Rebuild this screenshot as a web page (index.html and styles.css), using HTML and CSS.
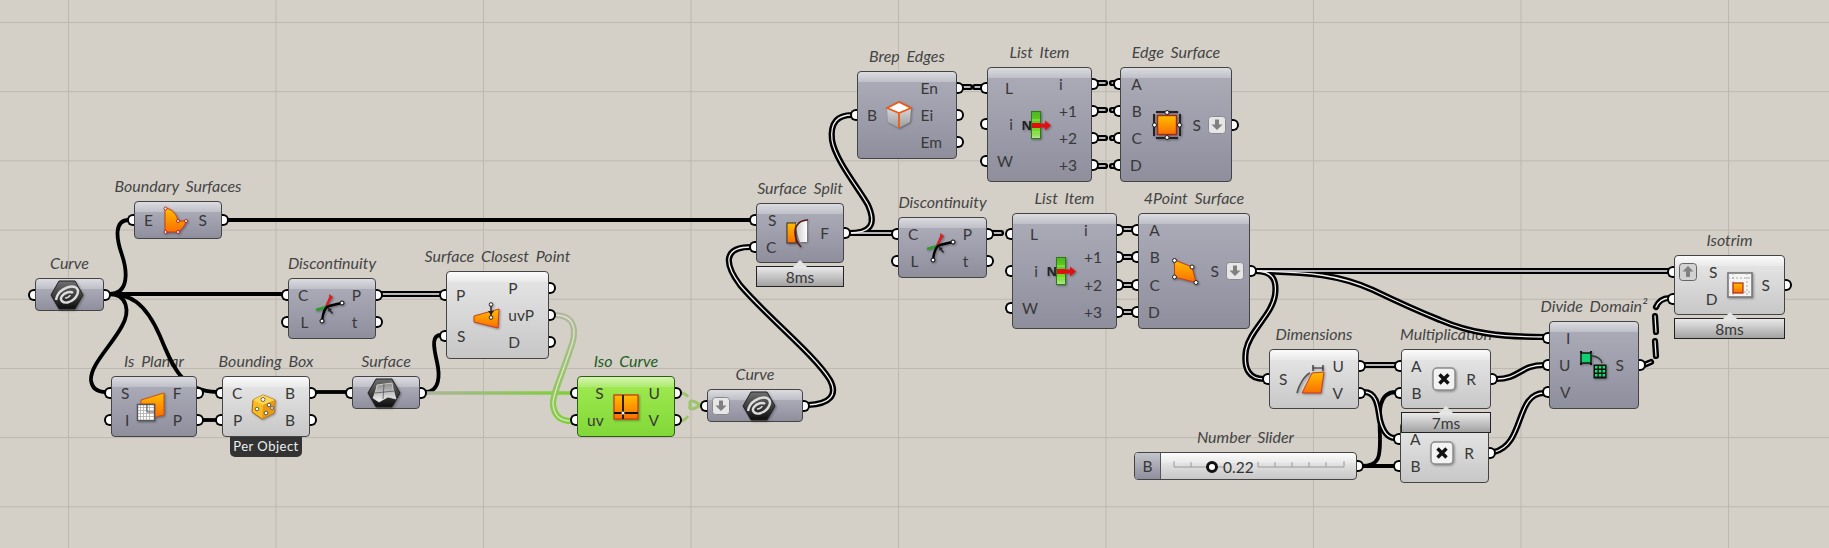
FILE: index.html
```html
<!DOCTYPE html>
<html lang="en">
<head>
    <meta charset="UTF-8">
    <title>Grasshopper definition</title>
    <link rel="stylesheet" href="styles.css">
</head>
<body>
<!-- shared gradients and icons -->
<svg class="defs" width="0" height="0">
    <defs>
        <linearGradient id="orange" x1="0" y1="0" x2="0" y2="1">
            <stop offset="0" stop-color="#ffbe00"/>
            <stop offset="1" stop-color="#fa6e00"/>
        </linearGradient>
        <linearGradient id="hexfill" x1="0" y1="0" x2="0" y2="1">
            <stop offset="0" stop-color="#707070"/>
            <stop offset=".55" stop-color="#3a3a3a"/>
            <stop offset="1" stop-color="#0c0c0c"/>
        </linearGradient>
        <linearGradient id="patch" x1="0" y1="0" x2="0" y2="1">
            <stop offset="0" stop-color="#8a8a8a"/>
            <stop offset="1" stop-color="#f4f4f4"/>
        </linearGradient>
        <linearGradient id="barfill" x1="0" y1="0" x2="0" y2="1">
            <stop offset="0" stop-color="#4cb820"/>
            <stop offset=".75" stop-color="#74dc28"/>
            <stop offset="1" stop-color="#b8e49c"/>
        </linearGradient>
        <linearGradient id="sidefill" x1="0" y1="0" x2="0" y2="1">
            <stop offset="0" stop-color="#d8d8d8"/>
            <stop offset="1" stop-color="#9c9c9c"/>
        </linearGradient>
        <linearGradient id="splitfill" x1="0" y1="0" x2="1" y2="0">
            <stop offset="0" stop-color="#c8c8c8"/>
            <stop offset="1" stop-color="#ffffff"/>
        </linearGradient>
        <linearGradient id="greenwire" gradientUnits="userSpaceOnUse" x1="0" y1="315" x2="0" y2="421">
            <stop offset="0" stop-color="#b4b6a4"/>
            <stop offset="1" stop-color="#80d03a"/>
        </linearGradient>
        <linearGradient id="greenline" gradientUnits="userSpaceOnUse" x1="425" y1="0" x2="572" y2="0">
            <stop offset="0" stop-color="#acb49c"/>
            <stop offset="1" stop-color="#7ed036"/>
        </linearGradient>

        <symbol id="i-curve" viewBox="0 0 34 30">
            <path d="M1 15 9 1H25L33 15 25 29H9Z" fill="url(#hexfill)" stroke="#222"/>
            <g fill="none" stroke="#dcdcdc">
                <path stroke-width="2.400" d="M6 20C7 11 18 5 25 7 31 10 27 19 19 22 13 24 9 20 12 16 15 12 21 11 23 13"/>
                <path stroke-width="1.600" d="M15 18C18 18 20 16 20 15"/>
            </g>
        </symbol>
        <symbol id="i-disc" viewBox="0 0 30 30">
            <path d="M11 13 16 2" stroke="#d82020" stroke-width="2.5" fill="none"/>
            <path d="M14 0 18 3 15 7Z" fill="#d82020"/>
            <path d="M1 16 11 13" stroke="#28a028" stroke-width="2.5"/>
            <path d="M7 27C8 18 10 13 14 12 18 11 22 10 27 9" stroke="#000" stroke-width="2.4" fill="none"/>
            <path d="M13 14 17 15 15.5 16 18 19 17 20 14.5 17 13.5 18Z" fill="#222"/>
            <circle cx="7" cy="27" r="2" fill="#fff" stroke="#000"/>
            <circle cx="27" cy="9" r="2" fill="#fff" stroke="#000"/>
        </symbol>
        <symbol id="i-list" viewBox="0 0 29 28">
            <text x="-0.500" y="19" class="icon-n">N</text>
            <rect x="9.5" y="0.5" width="9" height="27" fill="url(#barfill)" stroke="#2f7a18"/>
            <path d="M10 9H18M10 21H18" stroke="#9ee860" stroke-width="1"/>
            <rect x="10" y="12" width="8" height="5" fill="#e01010"/>
            <path d="M17 12.5H23V9.5L29 14.5 23 19.5V16.5H17Z" fill="#e01010"/>
        </symbol>
        <symbol id="i-down" viewBox="0 0 18 18">
            <rect x="0.5" y="0.5" width="17" height="17" rx="3" fill="#e6e6e6" stroke="#8a8a8a"/>
            <path d="M9 14 3.5 8.5H7V3.5H11V8.5H14.5Z" fill="#808080"/>
        </symbol>
        <symbol id="i-mult" viewBox="0 0 24 24">
            <rect x="1" y="1" width="22" height="22" rx="4" fill="#f2f2f2" stroke="#8c8c8c" stroke-width="1.5"/>
            <path d="M7.5 7.5 16.5 16.5M16.5 7.5 7.5 16.5" stroke="#111" stroke-width="3.4"/>
        </symbol>
    </defs>
</svg>

<div class="canvas">
    <svg class="wires" width="1829" height="548">
        <defs>
            <g id="lists">
                <path d="M381 294H441"/>
                <path d="M808 405C830 404 838 395 830 380 815 355 765 315 740 285 725 265 722 247 751 247"/>
                <path d="M849 233H893"/>
                <path d="M849 233C870 233 877 225 868 205 860 190 835 160 832 140 830 122 838 115 852 115"/>
                <path d="M992 233H1001"/>
                <path d="M962 87H970M975 87H982"/>
                <path d="M1097 83H1105M1112 83H1115"/>
                <path d="M1097 110H1105M1112 110H1115"/>
                <path d="M1097 138H1105M1112 138H1115"/>
                <path d="M1097 166H1105M1112 166H1115"/>
                <path d="M1122 229H1133M1122 257H1133M1122 285H1133M1122 312H1133"/>
                <path d="M1255 271H1669"/>
                <path d="M1255 271C1310 272 1340 275 1373 290 1400 303 1415 310 1440 320 1470 333 1500 337 1544 337"/>
                <path d="M1255 271C1273 271 1277 280 1275 295 1272 315 1250 330 1246 350 1243 370 1250 379 1264 379"/>
                <path d="M1364 365H1396"/>
                <path d="M1364 392C1378 392 1378 410 1380 420 1383 432 1388 438 1395 438"/>
                <path d="M1496 379C1520 379 1520 365 1544 365"/>
                <path d="M1494 452C1525 445 1515 393 1544 393"/>
                <path d="M1644 365 1651 362"/>
                <path d="M1655 341 1656 356"/>
                <path d="M1655 316 1656 332"/>
                <path d="M1656 307C1658 302 1663 298 1669 298"/>
            </g>
        </defs>
        <g class="wire-item">
            <path d="M109 294C130 294 127 270 122 255 116 238 114 220 129 220"/>
            <path d="M109 294H283"/>
            <path d="M109 294C128 294 130 312 122 326 112 345 90 365 91 380 92 390 100 392 106 392"/>
            <path d="M109 294C130 294 145 302 160 336 172 365 182 392 217 392"/>
            <path d="M202 420H217"/>
            <path d="M315 392H347"/>
            <path d="M425 392C440 392 440 375 437 362 433 345 432 335 441 335"/>
            <path d="M226 220H751"/>
            <path d="M1362 466H1395"/>
            <path d="M1362 466C1380 466 1380 455 1380 440 1380 420 1375 392 1396 392"/>
        </g>
        <use href="#lists" class="wire-outer"/>
        <use href="#lists" class="wire-inner"/>
        <path class="wire-green" d="M425 393H572"/>
        <path class="wire-green-o" d="M554 315C575 315 578 330 570 350 562 375 552 395 553 405 555 420 565 421 572 421"/>
        <path class="wire-green-i" d="M554 315C575 315 578 330 570 350 562 375 552 395 553 405 555 420 565 421 572 421"/>
        <path class="wire-hidden" d="M680 393C684 393 686 394 688 397M680 421C684 421 686 419 688 416M702 405C698 405 696 401 692 401 689 401 689 405 692 405 689 405 689 409 692 409 696 409 698 405 702 405"/>
    </svg>

    <div class="node n-bsrf">
        <div class="title">Boundary Surfaces</div>
        <div class="body dark">
            <div class="ports in"><span class="port">E</span></div>
            <div class="icon">
                <svg class="ico" width="26" height="28" viewBox="0 0 26 28">
                    <path d="M2 2C10 3 14 9 15 15H23C22 20 19 23 15 26H2Z" fill="url(#orange)" stroke="#c83c20"/>
                    <g fill="#fff" stroke="#b02828">
                        <circle cx="2.5" cy="2.5" r="1.5"/><circle cx="15" cy="15" r="1.5"/><circle cx="23" cy="15" r="1.5"/><circle cx="15" cy="26" r="1.5"/><circle cx="2.5" cy="26" r="1.5"/>
                    </g>
                </svg>
            </div>
            <div class="ports out"><span class="port">S</span></div>
        </div>
    </div>

    <div class="node n-curve">
        <div class="title">Curve</div>
        <div class="body dark">
            <div class="ports in"><span class="port"></span></div>
            <div class="icon"><svg class="ico" width="34" height="30"><use href="#i-curve"/></svg></div>
            <div class="ports out"><span class="port"></span></div>
        </div>
    </div>

    <div class="node n-disc1">
        <div class="title">Discontinuity</div>
        <div class="body dark">
            <div class="ports in"><span class="port">C</span><span class="port">L</span></div>
            <div class="icon"><svg class="ico" width="30" height="30"><use href="#i-disc"/></svg></div>
            <div class="ports out"><span class="port">P</span><span class="port">t</span></div>
        </div>
    </div>

    <div class="node n-planar">
        <div class="title">Is Planar</div>
        <div class="body dark">
            <div class="ports in"><span class="port">S</span><span class="port">I</span></div>
            <div class="icon">
                <svg class="ico" width="30" height="30" viewBox="0 0 30 30">
                    <path d="M5 8 28 1V23L19 25V12H5Z" fill="url(#orange)" stroke="#d05010"/>
                    <rect x="1.5" y="12.5" width="17" height="16" fill="#fff" stroke="#555" stroke-width="1.4"/>
                    <path d="M4.500 13V28M7.500 13V28M10.500 13V28M13.500 13V28M2 15.500H18M2 18.500H18M2 21.500H18M2 24.500H18" stroke="#aaa" stroke-width=".8"/>
                    <path d="M11 13V20H18" fill="none" stroke="#555"/>
                </svg>
            </div>
            <div class="ports out"><span class="port">F</span><span class="port">P</span></div>
        </div>
    </div>

    <div class="node n-bbox">
        <div class="title">Bounding Box</div>
        <div class="body light">
            <div class="ports in"><span class="port">C</span><span class="port">P</span></div>
            <div class="icon">
                <svg class="ico" width="25" height="26" viewBox="0 0 25 26">
                    <path d="M12 1 24 6 23 19 11 25 1 18 2 6Z" fill="#f8bc20" stroke="#a86010"/>
                    <path d="M2 6 12 11 24 6 12 1Z" fill="#ffd850"/>
                    <path d="M12 11 11 25 23 19 24 6Z" fill="#e89a14"/>
                    <g fill="#fff" stroke="#444" stroke-width=".8">
                        <circle cx="12" cy="5.500" r="2"/><circle cx="6" cy="15" r="1.800"/><circle cx="18" cy="11" r="1.800"/><circle cx="15" cy="19" r="1.800"/><circle cx="21" cy="14" r="1.500"/>
                    </g>
                </svg>
            </div>
            <div class="ports out"><span class="port">B</span><span class="port">B</span></div>
        </div>
        <div class="badge">Per Object</div>
    </div>

    <div class="node n-srf">
        <div class="title">Surface</div>
        <div class="body dark">
            <div class="ports in"><span class="port"></span></div>
            <div class="icon">
                <svg class="ico" width="34" height="30" viewBox="0 0 34 30">
                    <path d="M1 15 9 1H25L33 15 25 29H9Z" fill="url(#hexfill)" stroke="#222"/>
                    <path d="M10 7 25 5C26 12 28 17 29 21L21 19 12 24 6 20C8 16 9 12 10 7Z" fill="url(#patch)" stroke="#ddd" stroke-width=".8"/>
                    <path d="M17 6 16 21M8 15 27 13" stroke="#555" stroke-width=".8" fill="none"/>
                </svg>
            </div>
            <div class="ports out"><span class="port"></span></div>
        </div>
    </div>

    <div class="node n-scp">
        <div class="title">Surface Closest Point</div>
        <div class="body light">
            <div class="ports in"><span class="port">P</span><span class="port">S</span></div>
            <div class="icon">
                <svg class="ico" width="27" height="27" viewBox="0 0 27 27">
                    <path d="M1 14 26 7 25 26 1 20Z" fill="url(#orange)" stroke="#c83c20"/>
                    <path d="M18 2V15" stroke="#222" stroke-width="1.400"/>
                    <path d="M15 9H21L18 13Z" fill="#222"/>
                    <circle cx="18" cy="2.500" r="1.800" fill="#fff" stroke="#222"/>
                    <circle cx="18" cy="15.500" r="1.800" fill="#fff" stroke="#222"/>
                </svg>
            </div>
            <div class="ports out"><span class="port">P</span><span class="port">uvP</span><span class="port">D</span></div>
        </div>
    </div>

    <div class="node n-iso">
        <div class="title green-text">Iso Curve</div>
        <div class="body green">
            <div class="ports in"><span class="port">S</span><span class="port">uv</span></div>
            <div class="icon">
                <svg class="ico" width="26" height="26" viewBox="0 0 26 26">
                    <rect x="1" y="1" width="24" height="24" fill="url(#orange)" stroke="#d04418" stroke-width="1.400"/>
                    <path d="M10 1V25M1 19H25" stroke="#111" stroke-width="1.800"/>
                    <circle cx="10" cy="19" r="1.500" fill="#fff"/>
                </svg>
            </div>
            <div class="ports out"><span class="port">U</span><span class="port">V</span></div>
        </div>
    </div>

    <div class="node n-curve2">
        <div class="title">Curve</div>
        <div class="body dark">
            <div class="ports in"><span class="port has-btn"><svg class="btn" width="18" height="18"><use href="#i-down"/></svg></span></div>
            <div class="icon"><svg class="ico" width="34" height="30"><use href="#i-curve"/></svg></div>
            <div class="ports out"><span class="port"></span></div>
        </div>
    </div>

    <div class="node n-split">
        <div class="title">Surface Split</div>
        <div class="body dark">
            <div class="ports in"><span class="port">S</span><span class="port">C</span></div>
            <div class="icon">
                <svg class="ico" width="24" height="30" viewBox="0 0 24 30">
                    <rect x="1" y="5" width="9" height="20" fill="url(#orange)" stroke="#333"/>
                    <path d="M10 5C14 4 18 3 21 3V24H14C12 19 10 12 10 5Z" fill="url(#splitfill)"/>
                    <path d="M22 2C14 2 9 7 9 14 9 20 11 25 15 29" fill="none" stroke="#5a1a10" stroke-width="1.600"/>
                </svg>
            </div>
            <div class="ports out"><span class="port">F</span></div>
        </div>
        <div class="tip">8ms</div>
    </div>

    <div class="node n-brep">
        <div class="title">Brep Edges</div>
        <div class="body dark">
            <div class="ports in"><span class="port">B</span></div>
            <div class="icon">
                <svg class="ico" width="26" height="28" viewBox="0 0 26 28">
                    <path d="M1 7 13 12V27L2 21Z" fill="url(#sidefill)"/>
                    <path d="M13 12 25 7 24 21 13 27Z" fill="url(#sidefill)"/>
                    <path d="M1 7 13 1 25 7 13 12Z" fill="#fff"/>
                    <path d="M1 7 13 1 25 7 13 12ZM13 12V27" fill="none" stroke="#ec5a14" stroke-width="1.800"/>
                </svg>
            </div>
            <div class="ports out"><span class="port">En</span><span class="port">Ei</span><span class="port">Em</span></div>
        </div>
    </div>

    <div class="node n-list1">
        <div class="title">List Item</div>
        <div class="body dark">
            <div class="ports in"><span class="port">L</span><span class="port">i</span><span class="port">W</span></div>
            <div class="icon"><svg class="ico" width="29" height="28"><use href="#i-list"/></svg></div>
            <div class="ports out"><span class="port">i</span><span class="port">+1</span><span class="port">+2</span><span class="port">+3</span></div>
        </div>
    </div>

    <div class="node n-edge">
        <div class="title">Edge Surface</div>
        <div class="body dark">
            <div class="ports in"><span class="port">A</span><span class="port">B</span><span class="port">C</span><span class="port">D</span></div>
            <div class="icon">
                <svg class="ico" width="30" height="30" viewBox="0 0 30 30">
                    <path d="M4 2H26M4 28H26M2 4V26M28 4V26" stroke="#222" stroke-width="2"/>
                    <rect x="5.500" y="5.500" width="19" height="19" fill="url(#orange)" stroke="#a82818" stroke-width="1.400"/>
                    <g fill="#fff" stroke="#222"><circle cx="15" cy="2.500" r="2"/><circle cx="15" cy="27.500" r="2"/><circle cx="2.500" cy="15" r="2"/><circle cx="27.500" cy="15" r="2"/></g>
                </svg>
            </div>
            <div class="ports out"><span class="port has-btn">S<svg class="btn" width="18" height="18"><use href="#i-down"/></svg></span></div>
        </div>
    </div>

    <div class="node n-disc2">
        <div class="title">Discontinuity</div>
        <div class="body dark">
            <div class="ports in"><span class="port">C</span><span class="port">L</span></div>
            <div class="icon"><svg class="ico" width="30" height="30"><use href="#i-disc"/></svg></div>
            <div class="ports out"><span class="port">P</span><span class="port">t</span></div>
        </div>
    </div>

    <div class="node n-list2">
        <div class="title">List Item</div>
        <div class="body dark">
            <div class="ports in"><span class="port">L</span><span class="port">i</span><span class="port">W</span></div>
            <div class="icon"><svg class="ico" width="29" height="28"><use href="#i-list"/></svg></div>
            <div class="ports out"><span class="port">i</span><span class="port">+1</span><span class="port">+2</span><span class="port">+3</span></div>
        </div>
    </div>

    <div class="node n-four">
        <div class="title">4Point Surface</div>
        <div class="body dark">
            <div class="ports in"><span class="port">A</span><span class="port">B</span><span class="port">C</span><span class="port">D</span></div>
            <div class="icon">
                <svg class="ico" width="27" height="27" viewBox="0 0 27 27">
                    <path d="M2.500 2 20 9 24 24.500 2.500 19Z" fill="url(#orange)" stroke="#c83c20"/>
                    <g fill="#fff" stroke="#222"><circle cx="2.500" cy="2.500" r="2"/><circle cx="20" cy="9" r="2"/><circle cx="24" cy="24.500" r="2"/><circle cx="2.500" cy="19" r="2"/></g>
                </svg>
            </div>
            <div class="ports out"><span class="port has-btn">S<svg class="btn" width="18" height="18"><use href="#i-down"/></svg></span></div>
        </div>
    </div>

    <div class="node n-dim">
        <div class="title">Dimensions</div>
        <div class="body light">
            <div class="ports in"><span class="port">S</span></div>
            <div class="icon">
                <svg class="ico" width="29" height="30" viewBox="0 0 29 30">
                    <path d="M16 9 28 8 25 29H6Z" fill="url(#orange)" stroke="#c83c20"/>
                    <path d="M1 29C3 21 8 12 14 9" fill="none" stroke="#555" stroke-width="1.600"/>
                    <path d="M17 4H27M17 1V7M27 1V7" stroke="#222" stroke-width="1.200" fill="none"/>
                </svg>
            </div>
            <div class="ports out"><span class="port">U</span><span class="port">V</span></div>
        </div>
    </div>

    <div class="node n-mult2">
        <div class="body light">
            <div class="ports in"><span class="port">A</span><span class="port">B</span></div>
            <div class="icon"><svg class="ico" width="24" height="24"><use href="#i-mult"/></svg></div>
            <div class="ports out"><span class="port">R</span></div>
        </div>
    </div>

    <div class="node n-mult1">
        <div class="title">Multiplication</div>
        <div class="body light">
            <div class="ports in"><span class="port">A</span><span class="port">B</span></div>
            <div class="icon"><svg class="ico" width="24" height="24"><use href="#i-mult"/></svg></div>
            <div class="ports out"><span class="port">R</span></div>
        </div>
        <div class="tip">7ms</div>
    </div>

    <div class="node n-domain">
        <div class="title">Divide Domain²</div>
        <div class="body dark">
            <div class="ports in"><span class="port">I</span><span class="port">U</span><span class="port">V</span></div>
            <div class="icon">
                <svg class="ico" width="28" height="28" viewBox="0 0 28 28">
                    <rect x="2" y="2" width="10" height="10" fill="#10d070" stroke="#111" stroke-width="1.400"/>
                    <path d="M1 1H3M11 1H13M1 13H3M11 13H13" stroke="#111" stroke-width="2"/>
                    <path d="M13 5C18 5 22 8 23 12" fill="none" stroke="#333" stroke-width="1.400"/>
                    <rect x="14.500" y="13.500" width="13" height="14" fill="#111"/>
                    <g fill="#18e070">
                        <rect x="16" y="15" width="2.500" height="2.500"/><rect x="19.800" y="15" width="2.500" height="2.500"/><rect x="23.600" y="15" width="2.500" height="2.500"/>
                        <rect x="16" y="19" width="2.500" height="2.500"/><rect x="19.800" y="19" width="2.500" height="2.500"/><rect x="23.600" y="19" width="2.500" height="2.500"/>
                        <rect x="16" y="23" width="2.500" height="2.500"/><rect x="19.800" y="23" width="2.500" height="2.500"/><rect x="23.600" y="23" width="2.500" height="2.500"/>
                    </g>
                </svg>
            </div>
            <div class="ports out"><span class="port">S</span></div>
        </div>
    </div>

    <div class="node n-trim">
        <div class="title">Isotrim</div>
        <div class="body light">
            <div class="ports in">
                <span class="port has-btn"><svg class="btn" width="18" height="18" viewBox="0 0 18 18"><rect x="0.5" y="0.500" width="17" height="17" rx="3" fill="#d2d2d2" stroke="#666"/><path d="M9 3 14.500 8.500H11V14H7V8.500H3.500Z" fill="#808080"/></svg>S</span>
                <span class="port">D</span>
            </div>
            <div class="icon">
                <svg class="ico" width="26" height="26" viewBox="0 0 26 26">
                    <rect x="1" y="1" width="24" height="24" fill="#f4f4f4" stroke="#777" stroke-width="1.600"/>
                    <path d="M1 6H25M1 20H25M6 1V25M20 1V25" stroke="#aaa" stroke-dasharray="2 2"/>
                    <rect x="6" y="11" width="10" height="10" fill="url(#orange)" stroke="#b02818" stroke-width="1.200"/>
                </svg>
            </div>
            <div class="ports out"><span class="port">S</span></div>
        </div>
        <div class="tip">8ms</div>
    </div>

    <div class="node n-slider">
        <div class="title">Number Slider</div>
        <div class="body light slider">
            <div class="slider-tag">B</div>
            <div class="slider-track">
                <svg width="195" height="28" viewBox="0 0 195 28">
                    <path class="track-line" d="M13 8V14H51V8M30 9V14M51 14H64M97 14H183V8M97 9V14M114 9V14M131 9V14M148 9V14M165 9V14"/>
                    <circle cx="51" cy="14" r="4.500" fill="#fff" stroke="#111" stroke-width="3"/>
                    <text x="62" y="19.500" class="slider-value">0.22</text>
                </svg>
            </div>
            <div class="ports out"><span class="port"></span></div>
        </div>
    </div>
</div>
</body>
</html>
```

FILE: styles.css
```css
body {
    margin: 0;
    background: #d4d0c8;
}
.defs { position: absolute; }

.canvas {
    position: relative;
    width: 1829px;
    height: 548px;
    overflow: hidden;
    font-family: Lato, 'Open Sans', sans-serif;
    font-size: 15.5px;
    color: #383838;
    background-color: #d4d0c8;
    background-image:
        linear-gradient(90deg, #bcb8af 1px, transparent 1px),
        linear-gradient(#bcb8af 1px, transparent 1px);
    background-size: 207.5px 100%, 100% 69.2px;
    background-position: 68px 0, 0 22px;
}

/* wires */
.wires { position: absolute; left: 0; top: 0; z-index: 1; fill: none; }
.wire-item path { stroke: #000; stroke-width: 3.8; }
.wire-outer { stroke: #000; stroke-width: 6.2; stroke-linecap: round; }
.wire-inner { stroke: #f2f2f2; stroke-width: 1.3; stroke-linecap: round; }
.wire-green { stroke: url(#greenline); stroke-width: 3.4; }
.wire-green-o { stroke: url(#greenwire); stroke-width: 6.2; }
.wire-green-i { stroke: #dfe3cf; stroke-width: 1.3; }
.wire-hidden { stroke: #9cc46c; stroke-width: 3; }

/* nodes */
.node { position: absolute; }
.title {
    position: absolute;
    left: -60px;
    right: -60px;
    bottom: 100%;
    margin-bottom: 6px;
    text-align: center;
    white-space: nowrap;
    font-style: italic;
    font-size: 16px;
    word-spacing: 3px;
    line-height: 18px;
    color: #444;
}
.green-text { color: #1d5c1d; }

.body {
    position: relative;
    z-index: 2;
    display: flex;
    box-sizing: border-box;
    height: 100%;
    border: 1px solid #444;
    border-radius: 4px;
}
.dark { background: linear-gradient(#dbdbe0 0, #bfbfc9 10px, #aaaab7 10px, #8e8e9d 100%); }
.light { background: linear-gradient(#fbfbfb 0, #e9e9e9 10px, #e3e3e3 10px, #c7c7c7 100%); }
.green { background: linear-gradient(#d4f6ae 0, #aeea72 10px, #9ce84e 10px, #82d838 100%); border-color: #2f5a1c; }

.ports { display: flex; flex-direction: column; padding: 2px 0; }
.port {
    position: relative;
    flex: 1;
    display: flex;
    align-items: center;
    white-space: nowrap;
}
.in .port { justify-content: flex-end; padding-left: 9px; }
.out .port { padding-right: 14px; }
.in .has-btn { padding-left: 4px; gap: 12px; }
.out .has-btn { padding-right: 5px; gap: 7px; }
.port::after {
    content: "";
    position: absolute;
    top: 50%;
    box-sizing: border-box;
    width: 7px;
    height: 12px;
    margin-top: -6px;
    background: #fff;
    border: 2.5px solid #000;
}
.in .port::after { left: -8px; border-right: none; border-radius: 7px 0 0 7px; }
.out .port::after { right: -8px; border-left: none; border-radius: 0 7px 7px 0; }

.icon { flex: 1; display: flex; align-items: center; justify-content: center; }
.ico { filter: drop-shadow(1px 1px 1px rgba(0, 0, 0, .35)); }
.btn { flex: none; }
.icon-n { font: bold 13px 'Open Sans', sans-serif; fill: #222; }

.tip {
    position: absolute;
    z-index: 3;
    top: 100%;
    left: 0;
    right: 0;
    margin-top: 3px;
    height: 21px;
    line-height: 20px;
    box-sizing: border-box;
    text-align: center;
    border: 1px solid #222;
    background: linear-gradient(#e9e9e9, #a2a2a2);
}
.tip::before {
    content: "";
    position: absolute;
    left: 50%;
    bottom: 100%;
    margin-left: -7px;
    border: 7px solid transparent;
    border-top: none;
    border-bottom-color: #e4e4e4;
}
.badge {
    position: relative;
    z-index: 2;
    width: 72px;
    height: 20px;
    margin: 0 auto;
    line-height: 19px;
    text-align: center;
    font-size: 13px;
    letter-spacing: .5px;
    color: #f0f0f0;
    background: #333;
    border-radius: 0 0 5px 5px;
}

/* slider */
.slider-tag {
    width: 27px;
    line-height: 26px;
    text-align: center;
    border-right: 1px solid #555;
    border-radius: 3px 0 0 3px;
    background: linear-gradient(#c4c4cc, #8e8e9d);
}
.slider-track { flex: 1; }
.slider-track svg { display: block; }
.track-line { fill: none; stroke: #9a9a9a; stroke-width: 1; }
.slider-value { font: 15.5px Lato, sans-serif; fill: #333; }
.slider .ports { padding: 0; }
.slider .out .port { padding-right: 0; }

/* node places on the canvas */
.n-bsrf { left: 134px; top: 201px; width: 88px; height: 38px; }
.n-curve { left: 35px; top: 278px; width: 69px; height: 33px; }
.n-disc1 { left: 288px; top: 278px; width: 88px; height: 61px; }
.n-planar { left: 111px; top: 376px; width: 86px; height: 61px; }
.n-bbox { left: 222px; top: 376px; width: 88px; height: 61px; }
.n-srf { left: 352px; top: 376px; width: 68px; height: 33px; }
.n-scp { left: 446px; top: 271px; width: 103px; height: 88px; }
.n-iso { left: 577px; top: 376px; width: 98px; height: 61px; }
.n-curve2 { left: 707px; top: 389px; width: 96px; height: 33px; }
.n-split { left: 756px; top: 203px; width: 88px; height: 60px; }
.n-brep { left: 857px; top: 71px; width: 100px; height: 88px; }
.n-list1 { left: 987px; top: 67px; width: 105px; height: 115px; }
.n-edge { left: 1120px; top: 67px; width: 112px; height: 115px; }
.n-disc2 { left: 898px; top: 217px; width: 89px; height: 61px; }
.n-list2 { left: 1012px; top: 213px; width: 105px; height: 116px; }
.n-four { left: 1138px; top: 213px; width: 112px; height: 116px; }
.n-dim { left: 1269px; top: 349px; width: 90px; height: 60px; }
.n-mult1 { left: 1401px; top: 349px; width: 90px; height: 60px; }
.n-mult2 { left: 1400px; top: 422px; width: 89px; height: 61px; }
.n-domain { left: 1549px; top: 321px; width: 90px; height: 88px; }
.n-trim { left: 1674px; top: 255px; width: 111px; height: 60px; }
.n-slider { left: 1134px; top: 452px; width: 223px; height: 28px; }
```
